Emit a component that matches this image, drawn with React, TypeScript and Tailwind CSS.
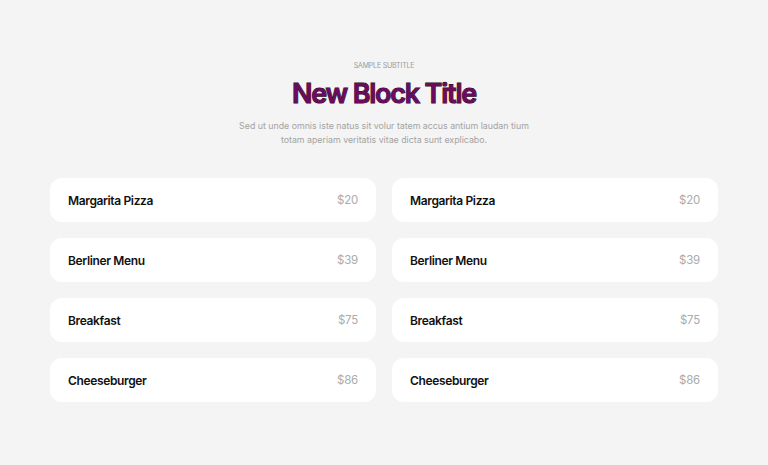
const items = [
  { name: "Margarita Pizza", price: "$20" },
  { name: "Berliner Menu", price: "$39" },
  { name: "Breakfast", price: "$75" },
  { name: "Cheeseburger", price: "$86" },
];

export default function App() {
  return (
    <div className="min-h-[465px] w-full bg-[#f4f4f4] font-['Inter',sans-serif] pt-[61px] pb-[62px]">
      <div className="flex flex-col items-center text-center">
        <p className="text-[7px] uppercase text-[#9a9a9a] tracking-tight leading-[10px]">Sample Subtitle</p>
        <h1 className="mt-[5px] text-[27px] font-semibold leading-[36px] tracking-[-0.045em] text-[#6a0b5e] [-webkit-text-stroke:1px_#1c0c1a] [paint-order:stroke_fill]">
          New Block Title
        </h1>
        <p className="mt-[7px] max-w-[300px] text-[8.8px] leading-[14px] text-[#a3a3a3]">
          Sed ut unde omnis iste natus sit volur tatem accus antium laudan tium totam aperiam veritatis vitae dicta sunt explicabo.
        </p>
      </div>

      <div className="mx-[50px] mt-[31px] grid grid-cols-2 gap-4">
        {[0, 1].map((col) => (
          <div key={col} className="flex flex-col gap-4">
            {items.map((item) => (
              <div key={item.name} className="flex h-[44px] items-center justify-between rounded-xl bg-white px-[18px] pt-px">
                <span className="text-[12px] font-semibold tracking-[-0.03em] text-[#111]">{item.name}</span>
                <span className="text-[11.5px] tracking-[-0.02em] text-[#ababab]">{item.price}</span>
              </div>
            ))}
          </div>
        ))}
      </div>
    </div>
  );
}
